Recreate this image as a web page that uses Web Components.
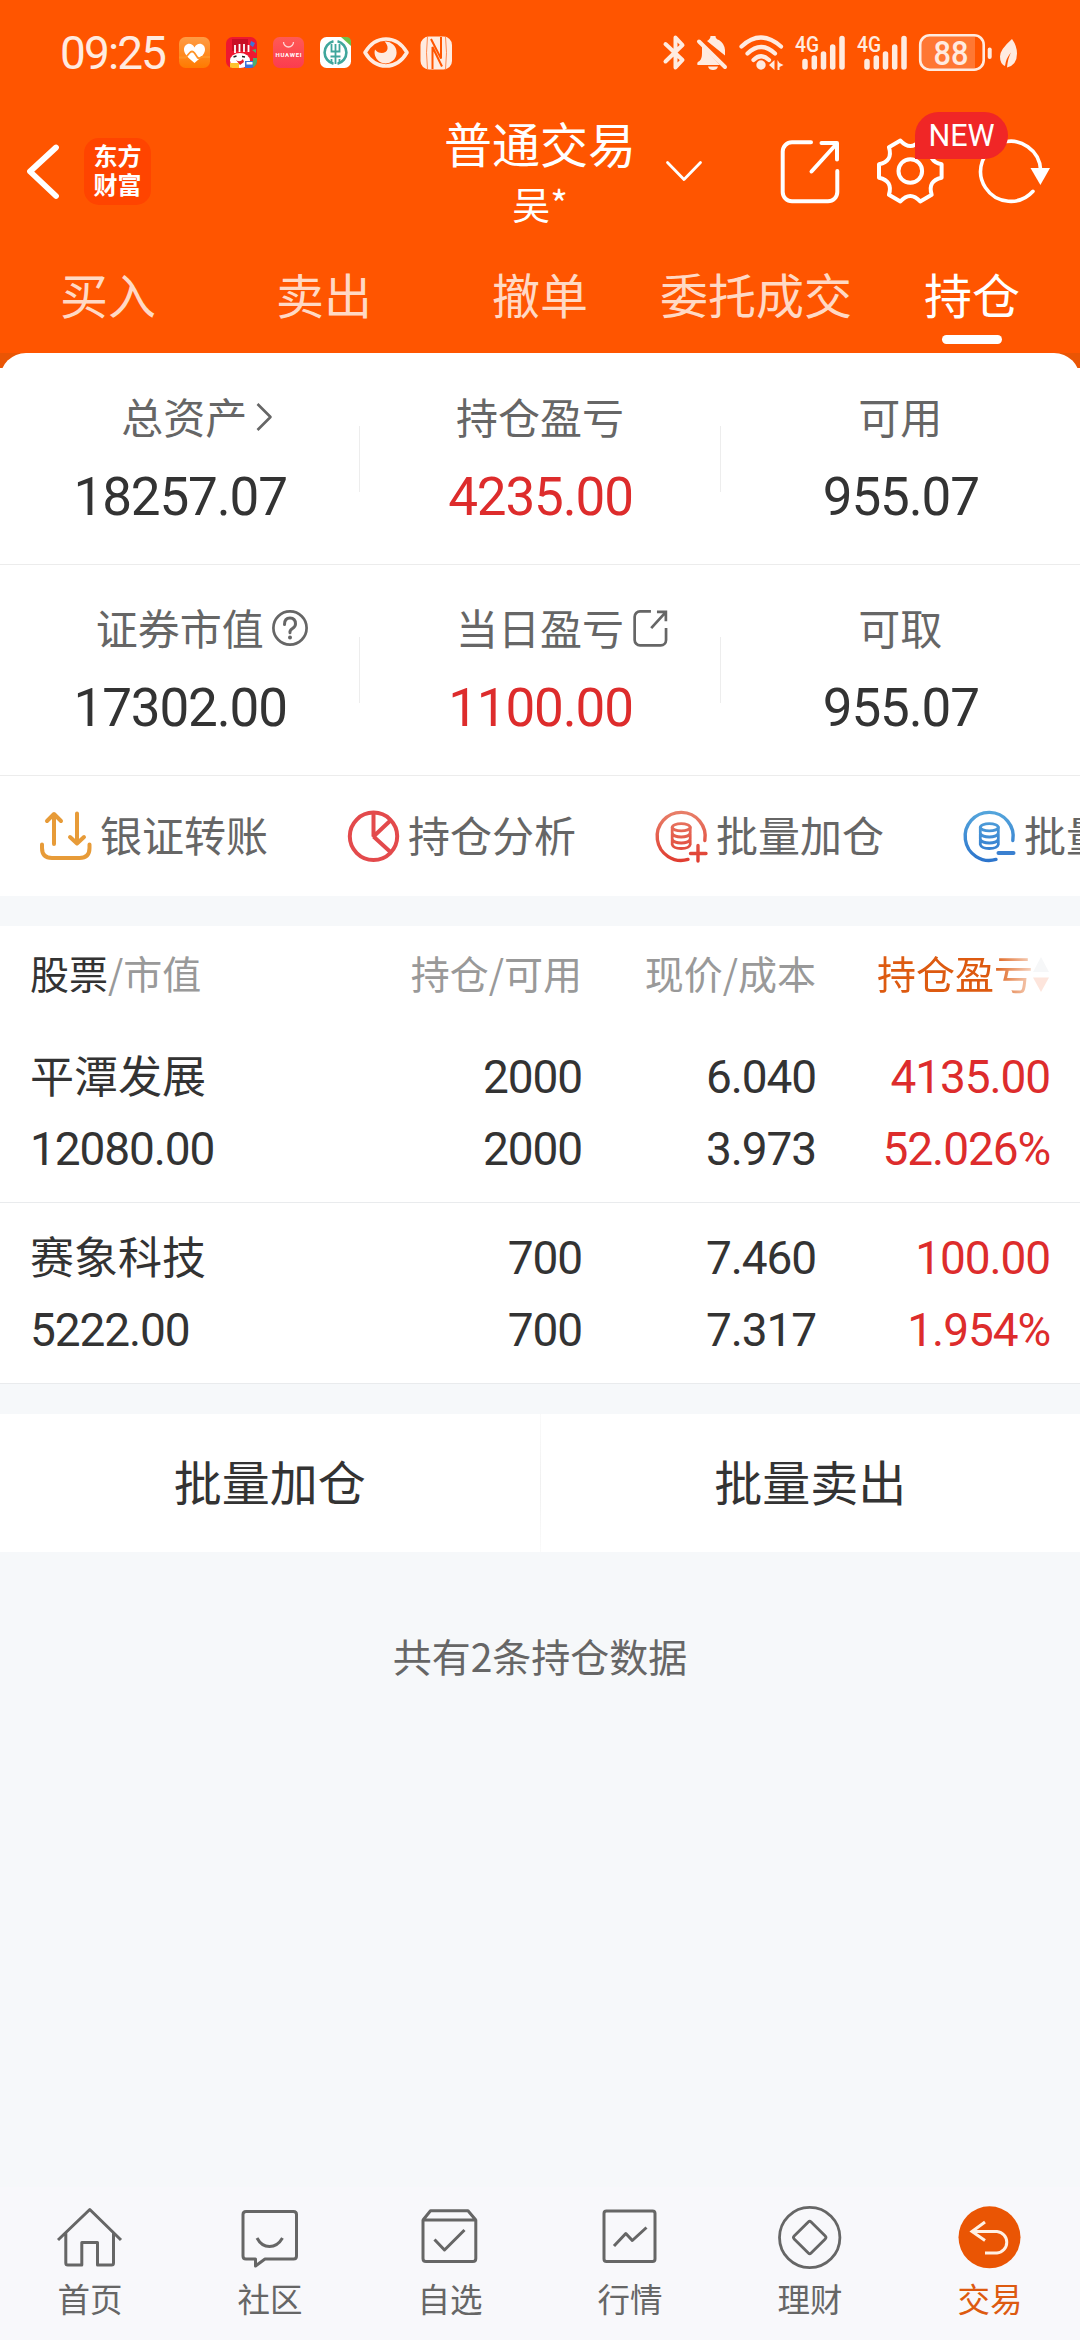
<!DOCTYPE html>
<html lang="zh-CN">
<head>
<meta charset="utf-8">
<title>持仓</title>
<style>
html,body{margin:0;padding:0}
body{width:1080px;height:2340px;overflow:hidden;background:#f6f8fa;font-family:"Noto Sans CJK SC",sans-serif;color:#333}
</style>
</head>
<body>
<trade-app></trade-app>
<script>
const define=(name,html,setup)=>{
  const t=document.createElement('template');
  t.innerHTML=html;
  customElements.define(name,class extends HTMLElement{
    connectedCallback(){
      if(this.shadowRoot)return;
      const r=this.attachShadow({mode:'open'});
      r.append(t.content.cloneNode(true));
      if(setup)setup(this,r);
    }
  });
};

const popout='<path d="M811 142.3H792a9.3 9.3 0 0 0-9.3 9.3V192a9.3 9.3 0 0 0 9.3 9.3H828a9.3 9.3 0 0 0 9.3-9.3V171M821.500 143H837V159.500M836 144.500L811.500 171.500"/>';
const stack=(x)=>`<ellipse cx="${x}" cy="826.300" rx="9" ry="3.600"/><path d="M${x-9} 826.300V843.500q1 4 9 4t9-4V826.300M${x-9} 832.500q2 3.500 9 3.500t9-3.500M${x-9} 838.500q2 3.500 9 3.500t9-3.500"/>`;
const bars=(x)=>`<text x="${x}" y="51" font-family="Roboto" font-weight="500" font-size="22.500" textLength="24" lengthAdjust="spacingAndGlyphs" fill="#ffebe0">4G</text><path fill="none" stroke="#ffebe0" stroke-width="5.500" stroke-linecap="round" d="M${x+10} 60.500V66M${x+19.3} 57V66M${x+28.5} 53V66M${x+37.7} 46V66M${x+47} 37.500V66"/>`;

/* name: [viewBox, svg attributes, markup] */
const ICONS={
  heart:['179 37 31 31','','<defs><linearGradient id="h" x2="0" y2="1"><stop stop-color="#ff9c45"/><stop offset="1" stop-color="#ff7a00"/></linearGradient></defs><rect x="179" y="37" width="31" height="31" rx="6.500" fill="url(#h)"/><path fill="#fff" d="M194.500 47.500c3-6.500 11-4 10.500 2.500-.4 5-6 9-10.500 13-4.500-4-10.200-8-10.500-13-.4-6.500 7.500-9 10.500-2.500z"/><path fill="none" stroke="#ff9326" stroke-width="1.800" d="M179 57.500h6.500l4-4.500q2.500-3 5 0l3 4.500q1.500 1.500 4-.5h8.500"/>'],
  sale:['226 37 31 31','','<defs><clipPath id="s"><rect x="226" y="37" width="31" height="31" rx="6.500"/></clipPath></defs><g clip-path="url(#s)"><path fill="#ee1830" d="M226 37h31v31h-31z"/><path fill="#c90f25" d="M232 39h16v12h-16z"/><path stroke="#fff" stroke-width="1.800" d="M235 45v8M239.500 44v8M244 44v8M248.500 45v7"/><ellipse cx="240" cy="60.500" rx="10" ry="7.500" fill="#fff"/><path d="M236 60q4 3 7-1l1 3-4 3z" fill="#e3202c"/><path stroke="#222" stroke-width="1.500" d="M233.500 57l3-1M242 56.500l3 .5"/><path fill="#3e73d8" d="M251 41l4 2-2 4-3-2zM245 61h9v7h-9z"/><path fill="#4cae6a" d="M252 50l4-1v4zM253 58h4v10h-4z"/><path fill="#ffc12d" d="M230 63h9v5h-9z"/><path fill="#fff" d="M246.500 62h6v2.500h-6z"/></g>'],
  mall:['273 37 31 31','','<defs><linearGradient id="m" x2="0" y2="1"><stop stop-color="#ff5a55"/><stop offset="1" stop-color="#fb3c50"/></linearGradient></defs><rect x="273" y="37" width="31" height="31" rx="6.500" fill="url(#m)"/><path d="M283.500 42a5 5 0 0 0 10 0" fill="none" stroke="#ffd6d4" stroke-width="1.300"/><text x="275.500" y="57" font-family="Roboto" font-weight="700" font-size="6" textLength="26" fill="#fff">HUAWEI</text>'],
  bank:['320 37 31 31','','<rect x="320" y="37" width="31" height="31" rx="6.500" fill="#fff"/><path fill="#6cc04a" d="M341 37h5q5 0 5 5v4z"/><g fill="none" stroke="#3fa69c"><path stroke-width="2.600" d="M333.500 41.300a11.500 11.500 0 0 0 0 22.400M337.500 41.300a11.500 11.500 0 0 1 0 22.400"/><path stroke-width="1.800" d="M335.500 44v20M330.500 56.500h10M331.500 44v7.500h8V44M331.500 63v-4M339.500 63v-4"/></g>'],
  eye:['363 36 46 33','','<path fill="none" stroke="#ffebe0" stroke-width="3.600" stroke-linejoin="round" d="M365 52.500Q373 39 386 39T407 52.500Q399 66 386 66T365 52.500z"/><path fill="#ffebe0" d="M384.500 41.500a11 11 0 1 1-9.500 8c3.500 5 11.500 4.500 12.500-.5.500-3-1-5.500-3-7.500z"/>'],
  nfc:['420 36 33 34','','<rect x="420.500" y="36.500" width="31.500" height="33" rx="8.500" fill="#ffebe0"/><path d="M427.500 36.500q-2 16 0 33M445.500 36.500q2 16 0 33" stroke="#ff8a50" stroke-width="1" fill="none"/><path fill="none" stroke="#ff5500" stroke-width="2" d="M432.500 69V47L442 66.500M441 37V58.500L431 39"/>'],
  bluetooth:['662 34 24 37','fill="none" stroke="#ffebe0" stroke-width="4" stroke-linecap="round" stroke-linejoin="round"','<path d="M665.500 44L682.500 60L675.500 67.500V37.500L682.500 45L665.500 61.500"/>'],
  mute:['696 34 33 37','','<path fill="#ffebe0" d="M707 41q3.500-2 3.500-5h5q0 3 3.500 4 5.500 3.500 6 10v5.500zM702 46L720 65H697.500q-1-3 2-4 2.500-2 2.500-8zM708 66.500h10q-1 3.500-5 3.500t-5-3.500z"/><path stroke="#ffebe0" stroke-width="4" stroke-linecap="round" d="M699 41.500L725 67"/>'],
  wifi:['738 33 46 37','fill="none" stroke="#ffebe0" stroke-width="4.200" stroke-linecap="round"','<path d="M741.500 45.500Q760.500 27.500 781 45.500M747.500 52.500Q761 39.500 775 52.500M753.500 59Q761 51.500 769 59"/><circle cx="761" cy="64" r="4.700" fill="#ffebe0" stroke="none"/><path fill="#ffebe0" stroke="none" d="M769 64l5.500-5v10zM777.500 59v10h2v-3l4-2-4-2z"/>'],
  signal:['795 33 51 37','',bars(795)],
  signal2:['857 33 51 37','',bars(857)],
  battery:['918 32 75 39','','<path fill="#ff7733" d="M929 35h46v33h-46q-8 0-8-8V43q0-8 8-8z"/><rect x="920.200" y="34.200" width="63.500" height="34.500" rx="9.500" fill="none" stroke="#ffebe0" stroke-width="2.600"/><path stroke="#ffebe0" stroke-width="4" stroke-linecap="round" d="M989.700 48.500v7.500"/><text x="933.500" y="63.500" font-family="Roboto" font-weight="500" font-size="33" textLength="35" lengthAdjust="spacingAndGlyphs" fill="#ffebe0">88</text>'],
  leaf:['999 36 19 30','','<path fill="#ffebe0" d="M1012 37q5 7 5 14.500 0 11.500-10 14 1-10 4-15-5 5.500-6 13.500-5-2-5-9.500 0-7 12-17.500z"/>'],
  back:['24 140 37 62','fill="none" stroke="#fff" stroke-width="5.800" stroke-linecap="round" stroke-linejoin="round"','<path d="M56 147.500L30 171.500L56 196"/>'],
  down:['664 151 40 40','fill="none" stroke="#fff" stroke-width="2.800" stroke-linecap="round" stroke-linejoin="round"','<path d="M667.500 162.500L684 179.500L700.500 162.500"/>'],
  share:['778 136 64 70','fill="none" stroke="#fff" stroke-width="4" stroke-linecap="round" stroke-linejoin="round"',popout],
  gear:['876 136 69 70','fill="none" stroke="#fff" stroke-width="4" stroke-linejoin="round"','<g transform="translate(910.300 171)"><circle r="11.800"/><path d="M-9.900-30.400Q0-19.600 9.900-30.400L21.400-23.800Q17-9.800 31.300-6.700L31.300 6.700Q17 9.800 21.400 23.800L9.900 30.400Q0 19.600-9.900 30.400L-21.400 23.800Q-17 9.800-31.300 6.700L-31.300-6.700Q-17-9.800-21.400-23.800Z"/></g>'],
  refresh:['978 136 74 70','fill="none" stroke="#fff" stroke-width="3.600" stroke-linecap="round"','<path d="M1040.600 170A30 30 0 1 0 1033 191.300"/><path fill="#fff" stroke="none" d="M1030.500 168h19.500l-9.600 17z"/>'],
  next:['257 400 18 34','fill="none" stroke="#666" stroke-width="2.600" stroke-linejoin="round"','<path d="M259.500 404L272.500 417L259.500 430"/>'],
  help:['272 610 36 36','fill="none" stroke="#666" stroke-width="2.700"','<circle cx="290" cy="628" r="16.600"/><path stroke-width="3" stroke-linecap="round" d="M284.500 624.500q0-6.500 5.500-6.500t5.500 6q0 2.500-3 4.500t-2.500 4.200"/><circle cx="290" cy="637.500" r="2" fill="#666" stroke="none"/>'],
  popout:['632 610 37 36','fill="none" stroke="#666" stroke-width="4.700"','<g transform="translate(184.600 529.600) scale(.575)">'+popout+'</g>'],
  transfer:['40 810 52 51','fill="none" stroke="#e79b38" stroke-width="4" stroke-linecap="round" stroke-linejoin="round"','<path d="M54 843V813.500M47 820L54 813L61 820M77 812.500V842M70 836L77 842.500L84 836M42 843.500V847q0 10 10 10H79.500q10 0 10-10V843.500"/>'],
  pie:['348 810 52 51','fill="none" stroke="#e34a4c" stroke-width="4"','<circle cx="373.500" cy="835.300" r="23.700"/><path stroke-linejoin="bevel" d="M373.500 811V835.500L391.500 818.500M373.500 835.500L391 851.500"/>'],
  add:['656 810 52 51','fill="none" stroke="url(#g)" stroke-width="2.800" stroke-linecap="round"','<defs><linearGradient id="g" gradientUnits="userSpaceOnUse" x1="0" y1="810" x2="0" y2="861"><stop stop-color="#e8806a"/><stop offset="1" stop-color="#e03c30"/></linearGradient></defs><path stroke-width="3.400" d="M704.800 839.500A24 24 0 1 0 688 858.400M690.500 852.500h15.500M698.001 844.500L698 860"/>'+stack(681.2)],
  minus:['964 810 52 51','fill="none" stroke="url(#b)" stroke-width="2.800" stroke-linecap="round"','<defs><linearGradient id="b" gradientUnits="userSpaceOnUse" x1="0" y1="810" x2="0" y2="861"><stop stop-color="#55a6dc"/><stop offset="1" stop-color="#2c74cc"/></linearGradient></defs><path stroke-width="3.400" d="M1012.800 839.500A24 24 0 1 0 996 858.400"/><path stroke="#3a80d0" stroke-width="4" d="M998.500 852H1013.500"/>'+stack(989.3)],
  sort:['1033 957 17 36','','<path fill="#f6f7f8" d="M1041 958l8 15h-16z"/><path fill="#fde5dc" d="M1041 993l8-14.500h-16z"/>'],
  home:['54 2200 72 76','fill="none" stroke="#666" stroke-width="3"','<path stroke-linejoin="round" d="M58 2240L89.800 2209.500L121 2240M65.800 2233V2263q0 2 2 2H81.800V2242.500H97.500V2265H111.500q2 0 2-2V2233"/>'],
  chat:['234 2200 72 76','fill="none" stroke="#666" stroke-width="3" stroke-linejoin="round"','<path d="M246 2211.500H293.500q3 0 3 3V2256q0 3-3 3H265L255.500 2266V2259H246q-3 0-3-3V2214.500q0-3 3-3z"/><path d="M257 2238q4.500 8.500 12.500 8.500t13-8.500"/>'],
  pick:['414 2200 72 76','fill="none" stroke="#666" stroke-width="3" stroke-linejoin="round"','<path d="M423 2220H475.800V2258.500q0 3-3 3H426q-3 0-3-3zL430.500 2210.700H468L475.800 2220M434.500 2239.500L444.500 2250L464.500 2230"/>'],
  market:['594 2200 72 76','fill="none" stroke="#666" stroke-width="3" stroke-linejoin="round"','<rect x="604" y="2211" width="51" height="50.500" rx="2.500"/><path d="M614 2246L625.800 2233.500L632.300 2240.500L646.500 2227.500"/>'],
  money:['774 2200 72 76','fill="none" stroke="#666" stroke-width="2.800" stroke-linejoin="round"','<circle cx="809.700" cy="2237.500" r="30.200"/><rect x="797.700" y="2225.500" width="24" height="24" rx="2" transform="rotate(45 809.700 2237.500)"/>'],
  trade:['954 2200 72 76','fill="none" stroke="#fff0e4" stroke-width="3"','<circle cx="989.500" cy="2237.300" r="31" fill="#ea5504" stroke="none"/><path d="M985 2222L972 2231.500L985 2240.500M972 2231.500H997a10.800 10.800 0 0 1 0 21.500H985"/>']
};

define('ui-icon','<style>:host{display:block;flex:none}svg{display:block;overflow:visible}</style>',(el,r)=>{
  const [vb,attr,body]=ICONS[el.getAttribute('name')];
  const [,,w,h]=vb.split(' ');
  const d=document.createElement('div');
  d.innerHTML=`<svg width="${w}" height="${h}" viewBox="${vb}" ${attr}>${body}</svg>`;
  r.append(d);
});

define('status-bar',`<style>
:host{display:flex;align-items:center;height:105px;box-sizing:border-box;padding:0 62px 0 60px;justify-content:space-between}
div{display:flex;align-items:center}
time{font:400 46px/60px Roboto,sans-serif;letter-spacing:-1.9px;color:#ffebe0;width:119px}
.apps{gap:16px}.apps ui-icon:nth-of-type(5){margin-left:-4px}.apps ui-icon:nth-of-type(6){margin-left:-5px}
.sys{gap:10px}
</style>
<div><time>09:25</time><div class="apps"><ui-icon name="heart"></ui-icon><ui-icon name="sale"></ui-icon><ui-icon name="mall"></ui-icon><ui-icon name="bank"></ui-icon><ui-icon name="eye"></ui-icon><ui-icon name="nfc"></ui-icon></div></div>
<div class="sys"><ui-icon name="bluetooth"></ui-icon><ui-icon name="mute"></ui-icon><ui-icon name="wifi" style="margin-left:-1px"></ui-icon><ui-icon name="signal" style="margin-left:1px"></ui-icon><ui-icon name="signal2" style="margin-left:1px"></ui-icon><ui-icon name="battery"></ui-icon><ui-icon name="leaf" style="margin-left:-4px"></ui-icon></div>`);

define('title-bar',`<style>
:host{display:grid;grid-template-columns:444px 192px 444px;align-items:center;height:132px;color:#fff}
.l,.r{display:flex;align-items:center}
.l{padding-left:24px}
.logo{margin-left:23px;width:67px;height:67px;border-radius:15px;background:#ff4400;display:flex;flex-direction:column;align-items:center;justify-content:center;font-weight:700;font-size:24px;line-height:29px}
.logo span{position:relative;top:-2px}
.t{text-align:center;white-space:nowrap;padding-top:1px}
.t b{display:block;font-weight:400;font-size:48px;line-height:61px}
.t i{display:block;font-style:normal;font-size:38px;line-height:59px}
.g{position:relative;margin-left:34px}
.new{position:absolute;left:39px;top:-24px;width:93px;height:47px;border-radius:24px 24px 24px 0;background:#f02626;font:400 30.500px/48px Roboto,sans-serif;text-align:center;z-index:2}
</style>
<div class="l"><ui-icon name="back"></ui-icon><div class="logo"><span>东方</span><span>财富</span></div></div>
<div class="t"><b>普通交易</b><i>吴*</i></div>
<div class="r"><ui-icon name="down" style="margin-left:28px"></ui-icon><ui-icon name="share" style="margin-left:74px"></ui-icon><div class="g"><ui-icon name="gear"></ui-icon><span class="new">NEW</span></div><ui-icon name="refresh" style="margin-left:33px"></ui-icon></div>`);

define('tab-item',`<style>
:host{display:flex;flex-direction:column;align-items:center;flex:1;font-size:48px;line-height:60px;color:#ffd9c5;white-space:nowrap}
:host([active]){color:#fff}
:host([active])::after{content:"";width:60px;height:9px;border-radius:5px;background:#fff;margin-top:12px}
</style><slot></slot>`);

define('app-header',`<style>
:host{display:block;background:#ff5500;height:353px}
nav{display:flex;padding-top:26px}
</style><status-bar></status-bar><title-bar></title-bar>
<nav><tab-item>买入</tab-item><tab-item>卖出</tab-item><tab-item>撤单</tab-item><tab-item>委托成交</tab-item><tab-item active>持仓</tab-item></nav>`);

define('asset-cell',`<style>
:host{display:flex;flex-direction:column;align-items:center;flex:1;padding-top:var(--cell-top,33px)}
.k{display:flex;align-items:center;font-size:42px;line-height:60px;color:#666;height:60px}
.k ::slotted(ui-icon){width:0;margin-left:8px;margin-right:-8px;position:relative;top:1px}
.v{font:400 53px/76px Roboto,sans-serif;letter-spacing:-1.15px;color:#333;margin-top:13px;padding-left:1px}
:host([up]) .v{color:#dd2c2c}
</style><div class="k"><slot name="k"></slot><slot name="icon"></slot></div><div class="v"><slot></slot></div>`);

define('asset-row',`<style>
:host{display:flex;align-items:stretch;height:211px;box-sizing:border-box;border-bottom:1px solid #ececec;--cell-top:32px}
:host(:first-of-type){height:212px;--cell-top:33px}
::slotted(hr){width:1px;height:66px;border:0;margin:0;align-self:center;background:#ededed}
</style><slot></slot>`);

define('quick-action',`<style>
:host{display:flex;align-items:center;gap:8px;flex:none;font-size:42px;line-height:60px;color:#666;white-space:nowrap}
span{margin-top:-4px}
</style><slot name="icon"></slot><span><slot></slot></span>`);

define('asset-card',`<style>
:host{display:block;background:linear-gradient(#ea5504 15px,#fff 15px)}
.card{background:#fff;border-radius:26px 26px 0 0}
.acts{display:flex;gap:80px;height:120px;padding-left:40px;overflow:hidden;align-items:center}
</style><div class="card">
<asset-row><asset-cell><span slot="k" style="padding-left:9px">总资产</span><ui-icon slot="icon" name="next"></ui-icon>18257.07</asset-cell><hr><asset-cell up><span slot="k">持仓盈亏</span>4235.00</asset-cell><hr><asset-cell><span slot="k">可用</span>955.07</asset-cell></asset-row>
<asset-row><asset-cell><span slot="k">证券市值</span><ui-icon slot="icon" name="help"></ui-icon>17302.00</asset-cell><hr><asset-cell up><span slot="k">当日盈亏</span><ui-icon slot="icon" name="popout"></ui-icon>1100.00</asset-cell><hr><asset-cell><span slot="k">可取</span>955.07</asset-cell></asset-row>
<div class="acts"><quick-action><ui-icon slot="icon" name="transfer"></ui-icon>银证转账</quick-action><quick-action><ui-icon slot="icon" name="pie"></ui-icon>持仓分析</quick-action><quick-action><ui-icon slot="icon" name="add"></ui-icon>批量加仓</quick-action><quick-action><ui-icon slot="icon" name="minus"></ui-icon>批量</quick-action></div></div>`);

define('holding-row',`<style>
:host{display:grid;grid-template-columns:318px 234px 234px 234px;grid-template-rows:72px 72px;padding:19px 30px 17px;border-bottom:1px solid #e9ebed;height:144px;font:400 46px/73px Roboto,sans-serif;letter-spacing:-1.1px;text-align:right;color:#333}
.n,.m{text-align:left}
.n{font:400 44px/67px "Noto Sans CJK SC",sans-serif;letter-spacing:0}
.up{color:#dd2c2c}
</style><span class="n"></span><span></span><span></span><span class="up"></span><span class="m"></span><span></span><span></span><span class="up"></span>`,(el,r)=>{
  const s=r.querySelectorAll('span');
  el.getAttribute('cells').split(' ').forEach((v,i)=>s[i].textContent=v);
});

define('holding-table',`<style>
:host{display:block;background:#fff;margin-top:30px}
.h{display:grid;grid-template-columns:318px 234px 234px 234px;padding:0 30px;height:96px;font-size:39px;line-height:92px;color:#999;text-align:right}
.h b{font-weight:400;color:#333}
.h span:first-child{text-align:left}
.h .p{display:flex;height:92px;justify-content:flex-end;align-items:center;color:#dd5a10}
.p ui-icon{margin-top:4px}
.p em{font-style:normal;-webkit-mask:linear-gradient(90deg,#000 115px,rgba(0,0,0,.25) 156px);mask:linear-gradient(90deg,#000 115px,rgba(0,0,0,.25) 156px)}
</style><div class="h"><span><b>股票</b>/市值</span><span>持仓/可用</span><span>现价/成本</span><span class="p"><em>持仓盈亏</em><ui-icon name="sort"></ui-icon></span></div>
<holding-row cells="平潭发展 2000 6.040 4135.00 12080.00 2000 3.973 52.026%"></holding-row>
<holding-row cells="赛象科技 700 7.460 100.00 5222.00 700 7.317 1.954%"></holding-row>`);

define('batch-bar',`<style>
:host{display:flex;background:#fff;margin-top:30px;height:138px;font-size:48px;line-height:72px;text-align:center}
button{all:unset;flex:1;box-sizing:border-box;padding-bottom:6px}
i{width:1px;background:linear-gradient(#fafafa,#f0f0f0,#fafafa)}
</style><button>批量加仓</button><i></i><button>批量卖出</button>`);

define('nav-item',`<style>
:host{display:flex;flex-direction:column;align-items:center;flex:1;font-size:32.500px;line-height:44px;color:#666}
:host([active]){color:#dd5a10}
</style><slot name="icon"></slot><slot></slot>`);

define('bottom-nav',`<style>
:host{display:flex;height:153px;box-sizing:border-box;padding-top:13px;background:#f8f8fb}
</style>`,(el,r)=>{
  for(const [i,t] of [['home','首页'],['chat','社区'],['pick','自选'],['market','行情'],['money','理财'],['trade','交易']]){
    const n=document.createElement('nav-item');
    if(i==='trade')n.setAttribute('active','');
    n.innerHTML=`<ui-icon slot="icon" name="${i}"></ui-icon>${t}`;
    r.append(n);
  }
});

define('trade-app',`<style>
:host{display:flex;flex-direction:column;height:2340px}
p{margin:73px 0 0;text-align:center;font-size:39px;line-height:60px;color:#666;flex:1}
</style><app-header></app-header><asset-card></asset-card><holding-table></holding-table><batch-bar></batch-bar><p>共有2条持仓数据</p><bottom-nav></bottom-nav>`);
</script>
</body>
</html>
